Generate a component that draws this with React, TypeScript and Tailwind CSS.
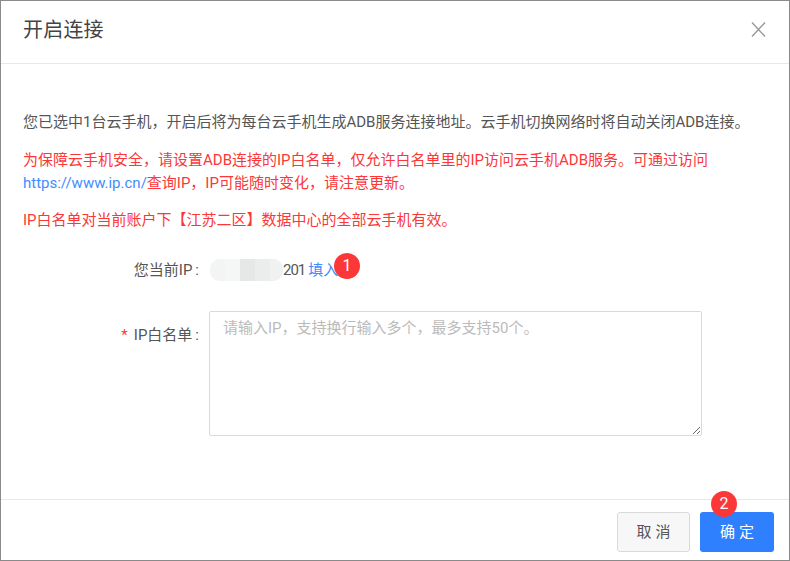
const fontStack = "font-['Roboto','Noto_Sans_CJK_SC',sans-serif]";

function Badge({ n, className }: { n: number; className: string }) {
  return (
    <span className={`absolute flex h-[26px] w-[26px] items-center justify-center rounded-full bg-[#fb3738] text-[16px] text-white ${className}`}>
      {n}
    </span>
  );
}

export default function App() {
  return (
    <div className={`${fontStack} flex h-[561px] w-[790px] flex-col overflow-hidden border border-[#8a8a8a] bg-white text-[#555]`}>
      {/* Header */}
      <div className="flex h-[63px] shrink-0 items-center justify-between border-b border-[#e8e8e8] pr-[23px] pb-[5px] pl-[22px]">
        <h1 className="text-[20px] leading-[28px] tracking-[0.2px] text-[#444]">开启连接</h1>
        <svg className="h-[15px] w-[15px] text-[#999]" viewBox="0 0 15 15" fill="none" stroke="currentColor" strokeWidth="1.4">
          <path d="M1 0.5l13 14M14 0.5l-13 14" />
        </svg>
      </div>

      {/* Body */}
      <div className="flex-1 px-[22px] pt-[47px] text-[15px] leading-[23px]">
        <p className="whitespace-nowrap text-[#555]">
          您已选中1台云手机，开启后将为每台云手机生成ADB服务连接地址。云手机切换网络时将自动关闭ADB连接。
        </p>
        <p className="mt-[15px] text-[#fb3738]">
          为保障云手机安全，请设置ADB连接的IP白名单，仅允许白名单里的IP访问云手机ADB服务。可通过访问
          <br />
          <a className="text-[#3f8cff]">https://www.ip.cn/</a>查询IP，IP可能随时变化，请注意更新。
        </p>
        <p className="mt-[14px] text-[#fb3738]">IP白名单对当前账户下【江苏二区】数据中心的全部云手机有效。</p>

        {/* Current IP */}
        <div className="mt-[26px] flex h-[24px] items-center">
          <span className="w-[176px] text-right text-[#555]">
            您当前IP<span className="ml-[3px]">:</span>
          </span>
          <div className="relative ml-[10px] flex items-center">
            <div className="ml-[1px] flex h-[22px] w-[73px] overflow-hidden rounded-[10px] bg-[#f1f2f2]">
              <span className="w-[15px] bg-[#f3f4f4]" />
              <span className="w-[15px] bg-[#f5f6f6]" />
              <span className="w-[15px] bg-[#e6e7e7]" />
              <span className="w-[15px] bg-[#ebecec]" />
              <span className="w-[13px] bg-[#f0f1f1]" />
            </div>
            <span className="tracking-[-1px] text-[#555]">201</span>
            <a className="ml-[3px] text-[#3f8cff]">填入</a>
            <Badge n={1} className="top-[-6px] left-[125px]" />
          </div>
        </div>

        {/* White list */}
        <div className="mt-[29px] flex items-start">
          <label className="mt-[13px] w-[176px] text-right">
            <span className="mr-[6px] text-[#fb3738]">*</span>IP白名单<span className="ml-[3px]">:</span>
          </label>
          <textarea
            className="ml-[10px] h-[125px] w-[493px] rounded-[2px] border border-[#d9d9d9] px-[13px] py-[5px] text-[15px] leading-[23px] outline-none placeholder:text-[#bbb]"
            placeholder="请输入IP，支持换行输入多个，最多支持50个。"
          />
        </div>
      </div>

      {/* Footer */}
      <div className="relative flex h-[61px] shrink-0 justify-end gap-[10px] border-t border-[#e8e8e8] pt-[12px] pr-[15px]">
        <button className="h-[40px] w-[73px] rounded-[3px] border border-[#d9d9d9] bg-[#f7f7f7] pl-[4px] text-[15px] tracking-[4px] text-[#555]">
          取消
        </button>
        <button className="h-[40px] w-[74px] rounded-[3px] bg-[#2f80ff] pl-[4px] text-[15px] tracking-[4px] text-white">
          确定
        </button>
        <Badge n={2} className="top-[-9px] left-[710px]" />
      </div>
    </div>
  );
}
